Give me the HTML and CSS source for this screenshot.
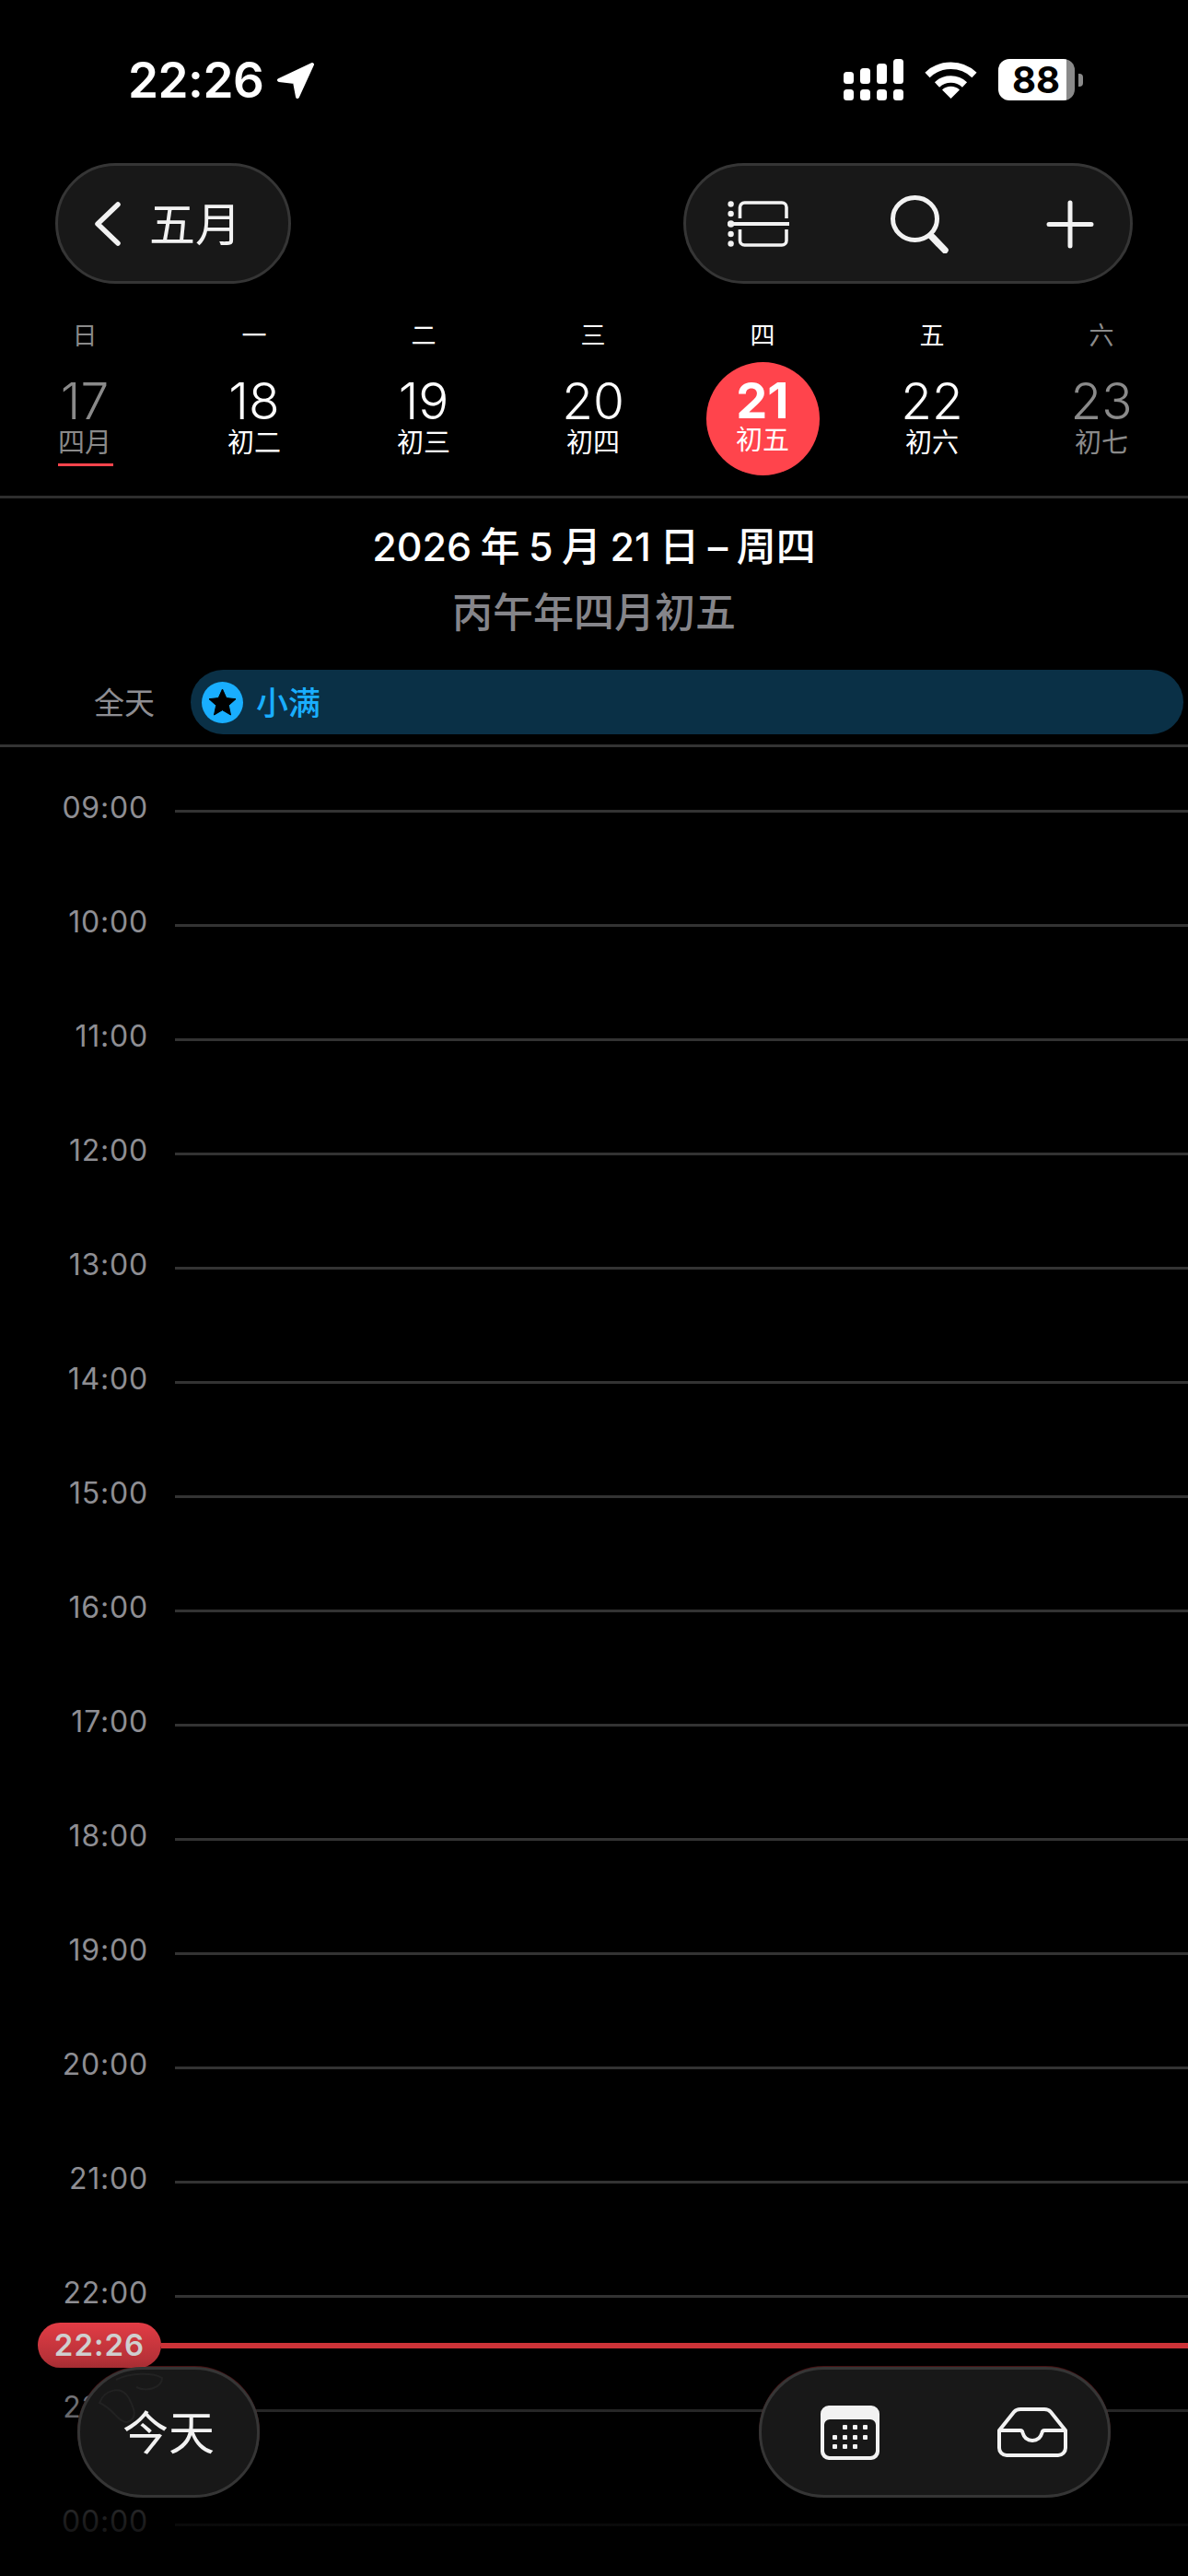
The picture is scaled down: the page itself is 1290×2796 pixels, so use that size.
FILE: index.html
```html
<!DOCTYPE html>
<html lang="zh-CN">
<head>
<meta charset="utf-8">
<title>日历</title>
<link rel="stylesheet" href="styles.css">
</head>
<body>
<div class="screen">
  <header class="status">
    <div class="status-left">
      <span class="clock">22:26</span>
      <svg class="loc" width="42" height="40" viewBox="0 0 42 40"><path d="M39 3 L3 20 L20 22 L23 38 Z" fill="#fff" stroke="#fff" stroke-width="4" stroke-linejoin="round"/></svg>
    </div>
    <div class="status-right">
      <svg width="65" height="45" viewBox="0 0 65 45" fill="#fff">
        <rect x="0" y="14" width="11" height="13" rx="3.5"/><rect x="18" y="10" width="11" height="17" rx="3.5"/><rect x="36" y="5" width="11" height="22" rx="3.5"/><rect x="54" y="0" width="11" height="27" rx="3.5"/>
        <rect x="0" y="33" width="11" height="12" rx="3.5"/><rect x="18" y="33" width="11" height="12" rx="3.5"/><rect x="36" y="33" width="11" height="12" rx="3.5"/><rect x="54" y="33" width="11" height="12" rx="3.5"/>
      </svg>
      <svg class="wifi" width="57" height="40" viewBox="0 0 57 40" fill="none" stroke="#fff" stroke-width="7.5">
        <path d="M3 14.5 A37 37 0 0 1 54 14.5"/>
        <path d="M13.5 25 A22 22 0 0 1 43.5 25"/>
        <path d="M19 30.5 A14 14 0 0 1 38 30.5 L28.5 40 Z" fill="#fff" stroke="none"/>
      </svg>
      <div class="battery"><span class="battery-level">88</span><i class="battery-cap"></i></div>
    </div>
  </header>

  <nav class="toolbar">
    <div class="pill back">
      <svg width="30" height="48" viewBox="0 0 30 48" fill="none" stroke="#f2f2f2" stroke-width="5.5" stroke-linecap="round" stroke-linejoin="round"><path d="M26 3 L4 24 L26 45"/></svg>
      <span>五月</span>
    </div>
    <div class="pill actions">
      <svg class="ic-list" width="68" height="50" viewBox="0 0 68 50" fill="none" stroke="#f2f2f2" stroke-width="3.6">
        <path d="M13.5 19 V7 a5 5 0 0 1 5-5 H59 a5 5 0 0 1 5 5 V19"/>
        <path d="M13.5 31 V43 a5 5 0 0 0 5 5 H59 a5 5 0 0 0 5-5 V31"/>
        <path d="M4 25 H67" stroke-width="4"/>
        <g fill="#f2f2f2" stroke="none"><circle cx="3.6" cy="3.5" r="3.2"/><circle cx="3.6" cy="14" r="3.2"/><circle cx="3.6" cy="25" r="3.8"/><circle cx="3.6" cy="36" r="3.2"/><circle cx="3.6" cy="46.5" r="3.2"/></g>
      </svg>
      <svg class="ic-search" width="63" height="63" viewBox="0 0 63 63" fill="none" stroke="#f2f2f2"><ellipse cx="26.5" cy="25.5" rx="24" ry="23" stroke-width="5"/><path d="M44 44 L59 59.5" stroke-width="7.5" stroke-linecap="round"/></svg>
      <svg class="ic-plus" width="52" height="53" viewBox="0 0 52 53" fill="none" stroke="#f2f2f2" stroke-width="5" stroke-linecap="round"><path d="M26 3 V50 M3 26.500 H49"/></svg>
    </div>
  </nav>

  <section class="week">
    <div class="week-row">
      <span class="wd muted">日</span><span class="wd">一</span><span class="wd">二</span><span class="wd">三</span><span class="wd">四</span><span class="wd">五</span><span class="wd muted">六</span>
    </div>
    <div class="week-row days">
      <div class="day muted"><b>17</b><small class="month-mark">四月</small></div>
      <div class="day"><b>18</b><small>初二</small></div>
      <div class="day"><b>19</b><small>初三</small></div>
      <div class="day"><b>20</b><small>初四</small></div>
      <div class="day today"><b>21</b><small>初五</small></div>
      <div class="day"><b>22</b><small>初六</small></div>
      <div class="day muted"><b>23</b><small>初七</small></div>
    </div>
  </section>

  <section class="heading">
    <h1>2026 年 5 月 21 日 – 周四</h1>
    <p>丙午年四月初五</p>
  </section>

  <section class="allday">
    <span class="allday-label">全天</span>
    <div class="event">
      <svg width="45" height="45" viewBox="0 0 45 45"><circle cx="22.500" cy="22.500" r="22.500" fill="#19aeff"/><path d="M22.500 8 L26.800 17.600 L37 18.700 L29.300 25.600 L31.500 36 L22.500 30.700 L13.500 36 L15.700 25.600 L8 18.700 L18.200 17.600 Z" fill="#000" stroke="#000" stroke-width="1" stroke-linejoin="round"/></svg>
      <span>小满</span>
    </div>
  </section>

  <section class="timeline">
    <div class="hour"><span>09:00</span><i></i></div>
    <div class="hour"><span>10:00</span><i></i></div>
    <div class="hour"><span>11:00</span><i></i></div>
    <div class="hour"><span>12:00</span><i></i></div>
    <div class="hour"><span>13:00</span><i></i></div>
    <div class="hour"><span>14:00</span><i></i></div>
    <div class="hour"><span>15:00</span><i></i></div>
    <div class="hour"><span>16:00</span><i></i></div>
    <div class="hour"><span>17:00</span><i></i></div>
    <div class="hour"><span>18:00</span><i></i></div>
    <div class="hour"><span>19:00</span><i></i></div>
    <div class="hour"><span>20:00</span><i></i></div>
    <div class="hour"><span>21:00</span><i></i></div>
    <div class="hour"><span>22:00</span><i></i></div>
    <div class="hour"><span>23:00</span><i></i></div>
    <div class="hour"><span>00:00</span><i></i></div>
  </section>

  <div class="now"><span class="now-time">22:26</span><i class="now-line"></i></div>
  <div class="fade"></div>

  <footer class="bottom">
    <div class="pill pill-lg today-btn">
      <svg class="glass" width="150" height="55" viewBox="0 0 150 55" fill="none" stroke="#222" stroke-width="2"><path d="M6 33 C12 18 30 14 38 28 C44 40 48 50 36 54 C26 54 22 40 6 33 Z"/><path d="M24 8 C40 0 64 0 74 6 C74 16 58 22 46 16"/></svg>
      <span>今天</span>
    </div>
    <div class="pill pill-lg tools">
      <svg width="64" height="59" viewBox="0 0 64 59">
        <path fill-rule="evenodd" fill="#f2f2f2" d="M9 0 H55 a9 9 0 0 1 9 9 V50 a9 9 0 0 1-9 9 H9 a9 9 0 0 1-9-9 V9 a9 9 0 0 1 9-9 Z M10 15 a6 6 0 0 0-6 6 V49 a6 6 0 0 0 6 6 H54 a6 6 0 0 0 6-6 V21 a6 6 0 0 0-6-6 Z"/>
        <g fill="#f2f2f2">
          <rect x="24" y="21" width="5" height="5" rx="1"/><rect x="35" y="21" width="5" height="5" rx="1"/><rect x="46" y="21" width="5" height="5" rx="1"/>
          <rect x="13" y="32" width="5" height="5" rx="1"/><rect x="24" y="32" width="5" height="5" rx="1"/><rect x="35" y="32" width="5" height="5" rx="1"/><rect x="46" y="32" width="5" height="5" rx="1"/>
          <rect x="13" y="42" width="5" height="5" rx="1"/><rect x="24" y="42" width="5" height="5" rx="1"/><rect x="35" y="42" width="5" height="5" rx="1"/>
        </g>
      </svg>
      <svg width="76" height="54" viewBox="0 0 76 54" fill="none" stroke="#f2f2f2" stroke-width="4" stroke-linejoin="round">
        <path d="M2 25 L18 5 Q20.500 2 25 2 H51 Q55.500 2 58 5 L74 25 V44 a8 8 0 0 1-8 8 H10 a8 8 0 0 1-8-8 Z"/>
        <path d="M2 25 H25 Q27 25 27.500 27.500 C29 33 33 36 38 36 C43 36 47 33 48.500 27.500 Q49 25 51 25 H74"/>
      </svg>
    </div>
  </footer>
</div>
</body>
</html>
```
FILE: styles.css
```css
* { box-sizing: border-box; margin: 0; padding: 0; }
html, body { background: #000; }
body { width: 1290px; height: 2796px; overflow: hidden; font-family: Inter, "Noto Sans CJK SC", sans-serif; color: #fff; }
i { display: block; }
.screen { position: relative; width: 1290px; height: 2796px; overflow: hidden; background: #000; }

.status { height: 177px; padding: 64px 114px 0 139px; display: flex; justify-content: space-between; align-items: flex-start; }
.status-left { display: flex; align-items: center; gap: 14px; height: 45px; }
.clock { font-size: 53px; font-weight: 600; line-height: 45px; letter-spacing: -0.5px; position: relative; top: 1px; }
.status-right { display: flex; align-items: flex-start; gap: 23px; }
.wifi { margin-top: 3px; }
.battery { display: flex; align-items: center; gap: 4px; }
.battery-level { display: block; width: 83px; height: 45px; border-radius: 12px; background: linear-gradient(90deg, #fff 89%, #8a8a8a 89%); color: #000; font-size: 40px; font-weight: 700; line-height: 45px; padding-left: 15px; letter-spacing: 0; }
.battery-cap { width: 5px; height: 14px; background: #8a8a8a; border-radius: 0 4px 4px 0; }

.toolbar { height: 131px; padding: 0 60px; display: flex; justify-content: space-between; }
.pill { display: flex; align-items: center; height: 131px; border: 3px solid #353535; background: #181818; border-radius: 66px; color: #f2f2f2; }
.back { width: 256px; padding-left: 39px; gap: 30px; font-size: 50px; }
.back span { line-height: 1; position: relative; top: 1px; }
.actions { width: 488px; padding-left: 45px; }
.ic-search { margin-left: 109px; position: relative; top: 1px; }
.ic-plus { margin-left: 106px; position: relative; top: 1px; }

.week { height: 233px; padding-top: 42px; border-bottom: 3px solid #2e2e2e; }
.week-row { display: grid; grid-template-columns: repeat(7, 184px); justify-items: center; }
.wd { font-size: 27px; line-height: 30px; color: #fff; }
.wd.muted { color: #8a8a8a; }
.days { margin-top: 13px; }
.day { position: relative; width: 123px; height: 123px; border-radius: 50%; display: flex; flex-direction: column; align-items: center; padding-top: 15px; }
.day b { font-size: 55px; font-weight: 300; line-height: 54px; letter-spacing: 0; }
.day small { font-size: 29px; line-height: 32px; margin-top: 3px; }
.day.muted { color: #8a8a8a; }
.today { background: #ff444c; padding-top: 17px; }
.today b { font-weight: 700; font-size: 54px; line-height: 50px; }
.today small { margin-top: 2px; }
.month-mark::after { content: ""; position: absolute; left: 32px; bottom: 10px; width: 60px; height: 3px; background: #ff444c; }

.heading { padding-top: 27px; text-align: center; }
.heading h1 { font-size: 43px; font-weight: 500; line-height: 50px; word-spacing: -2px; }
.heading p { font-size: 44px; font-weight: 500; line-height: 50px; margin-top: 22px; color: #85858a; }

.allday { display: flex; align-items: center; margin-top: 37px; padding: 0 5px 11px 0; height: 84px; border-bottom: 3px solid #333; }
.allday-label { width: 168px; text-align: right; font-size: 33px; line-height: 70px; color: #8e8e93; margin-right: 39px; position: relative; top: 1px; }
.event { flex: 1; height: 70px; border-radius: 35px; background: #0a3046; color: #19aeff; display: flex; align-items: center; gap: 14px; padding-left: 12px; font-size: 35px; font-weight: 500; }
.event span { position: relative; top: -2px; }

.timeline { padding-top: 39px; }
.hour { display: flex; height: 124px; }
.hour span { width: 161px; text-align: right; font-size: 32px; line-height: 53px; color: #8e8e93; letter-spacing: 0.8px; }
.hour i { flex: 1; height: 3px; margin: 29px 0 0 29px; background: #333; }

.now { position: absolute; left: 41px; right: 0; top: 2521px; display: flex; align-items: center; }
.now-time { width: 134px; height: 49px; border-radius: 25px; background: linear-gradient(180deg, #e23c45, #ad2f35); color: #cfcfcf; font-size: 33px; font-weight: 600; line-height: 49px; text-align: center; letter-spacing: 1px; }
.now-line { flex: 1; height: 6px; background: #cc3338; }

.fade { position: absolute; left: 0; right: 0; top: 2560px; bottom: 0; background: linear-gradient(180deg, rgba(0,0,0,0), rgba(0,0,0,0.9) 85%, #000); }

.bottom { position: absolute; left: 84px; right: 84px; top: 2569px; display: flex; justify-content: space-between; }
.pill-lg { height: 142px; border-radius: 71px; box-shadow: 0 -1px 0 rgba(200,50,55,0.35); }
.today-btn { position: relative; width: 198px; justify-content: center; font-size: 50px; }
.today-btn span { line-height: 1; position: relative; top: 1px; }
.glass { position: absolute; left: 15px; top: 3px; }
.tools { width: 382px; padding-left: 64px; gap: 128px; }
```
